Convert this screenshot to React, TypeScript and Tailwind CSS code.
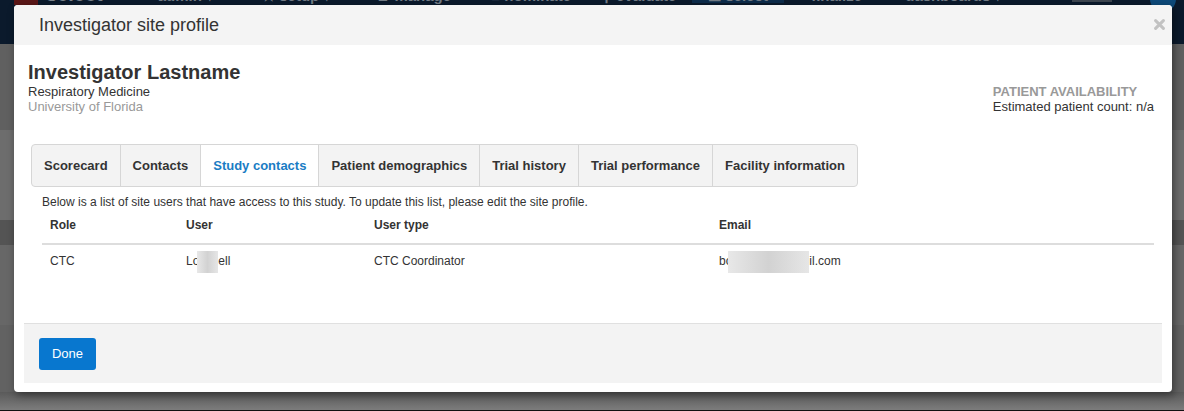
import React from "react";

const tabs = [
  "Scorecard",
  "Contacts",
  "Study contacts",
  "Patient demographics",
  "Trial history",
  "Trial performance",
  "Facility information",
];

function Blur({ w }: { w: string }) {
  return (
    <span
      className={`inline-block h-[22px] -my-[4px] align-middle bg-gradient-to-r from-[#e8e8e8] via-[#d2d2d2] to-[#e6e6e6] ${w}`}
    />
  );
}

function Backdrop() {
  return (
    <div className="flex h-full w-full flex-col">
      {/* app nav behind the overlay */}
      <div className="flex h-[44px] items-start bg-[#0b1a2c] text-[15px] font-bold text-[#737c86]">
        <div className="ml-[14px] -mt-[9px] h-[14px] w-[24px] bg-[#5b1717]" />
        <span className="-mt-[13px] ml-[8px] text-[20px] text-[#7d858e]">select</span>
        <span className="-mt-[12px] ml-[55px]">admin ▾</span>
        <span className="-mt-[12px] ml-[48px]">★ setup ▾</span>
        <span className="-mt-[12px] ml-[44px]">▲ manage</span>
        <span className="-mt-[12px] ml-[40px]">■ nominate</span>
        <span className="-mt-[12px] ml-[30px]">⚲ evaluate</span>
        <span className="-mt-[12px] ml-[16px] bg-[#0d2c4b] px-[16px]">☰ select</span>
        <span className="-mt-[12px] ml-[14px]">○ finalize</span>
        <span className="-mt-[12px] ml-[30px]">● dashboards ▾</span>
        <div className="-mt-[4px] ml-[70px] h-[6px] w-[40px] bg-[#3d4650]" />
        <div className="-mt-[14px] ml-[38px] h-[26px] w-[26px] rounded-full bg-[#0d4a7a]" />
      </div>
      <div className="h-[86px] bg-[#606060]" />
      <div className="h-[90px] bg-[#6d6d6d]" />
      <div className="h-[25px] bg-[#545454]" />
      <div className="h-[80px] bg-[#676767]" />
      <div className="flex h-[67px] items-end bg-[#626262] pb-[12px] text-[13px] text-[#2a2a2a]">
        <span className="ml-[15px] h-[12px] w-[12px] border border-[#333]" />
        <span className="ml-[98px] h-[12px] w-[12px] border border-[#444]" />
        <span className="ml-[52px] h-[12px] w-[12px] border border-[#444]" />
        <span className="ml-[34px] -mb-[2px]">Name, Name</span>
        <span className="ml-[90px] -mb-[2px]">Vn, Sn</span>
      </div>
      <div className="flex-1 bg-gradient-to-b from-[#5a5a5a] to-[#7c7c7c]" />
      <div className="h-[1px] bg-[#111]" />
    </div>
  );
}

export default function App() {
  return (
    <div className="relative h-[411px] w-[1184px] overflow-hidden font-['Liberation_Sans',Arial,sans-serif] text-[13px] leading-[15px] text-[#333]">
      <Backdrop />

      <div className="absolute left-[14px] top-[5px] flex h-[387px] w-[1158px] flex-col overflow-hidden rounded-[4px] bg-white shadow-[2px_3px_8px_rgba(0,0,0,0.45)]">
        {/* header */}
        <div className="relative flex h-[40px] shrink-0 items-center bg-[#f4f4f4] pl-[25px] text-[18px] leading-[22px] text-[#333]">
          Investigator site profile
          <button className="absolute right-[7px] top-[14px]" aria-label="Close">
            <svg width="11" height="11" viewBox="0 0 11 11">
              <path d="M1.6 1.6 L9.4 9.4 M9.4 1.6 L1.6 9.4" stroke="#c2c2c2" strokeWidth="3" strokeLinecap="round" />
            </svg>
          </button>
        </div>

        {/* profile summary */}
        <div className="flex items-end justify-between pl-[14px] pr-[18px] pt-[15px]">
          <div>
            <div className="text-[20px] font-bold leading-[24px] text-[#333]">Investigator Lastname</div>
            <div>Respiratory Medicine</div>
            <div className="text-[#999]">University of Florida</div>
          </div>
          <div className="whitespace-nowrap">
            <div className="font-bold text-[#999]">PATIENT AVAILABILITY</div>
            <div>Estimated patient count: n/a</div>
          </div>
        </div>

        {/* tabs */}
        <div className="ml-[17px] mt-[30px] flex self-start overflow-hidden rounded-[4px] border border-[#d6d6d6] bg-[#f3f3f3]">
          {tabs.map((t, i) => (
            <div
              key={t}
              className={`px-[12px] py-[13px] font-bold ${i < tabs.length - 1 ? "border-r border-[#d6d6d6]" : ""} ${
                t === "Study contacts" ? "bg-white text-[#1a7cc4]" : "text-[#333]"
              }`}
            >
              {t}
            </div>
          ))}
        </div>

        {/* study contacts */}
        <div className="mx-[28px] mt-[8px] w-[1112px] text-[12px]">
          <p>
            Below is a list of site users that have access to this study. To update this list, please edit the site
            profile.
          </p>
          <table className="w-full border-collapse text-left">
            <thead>
              <tr className="border-b-2 border-[#dddddd]">
                <th className="w-[136px] px-[8px] pb-[10px] pt-[8px] font-bold">Role</th>
                <th className="w-[188px] px-[8px] pb-[10px] pt-[8px] font-bold">User</th>
                <th className="w-[345px] px-[8px] pb-[10px] pt-[8px] font-bold">User type</th>
                <th className="px-[8px] pb-[10px] pt-[8px] font-bold">Email</th>
              </tr>
            </thead>
            <tbody>
              <tr>
                <td className="px-[8px] pb-[8px] pt-[9px]">CTC</td>
                <td className="px-[8px] pb-[8px] pt-[9px]">
                  Lo
                  <Blur w="w-[21px] -ml-[2px]" />
                  ell
                </td>
                <td className="px-[8px] pb-[8px] pt-[9px]">CTC Coordinator</td>
                <td className="px-[8px] pb-[8px] pt-[9px]">
                  bo
                  <Blur w="w-[81px] -ml-[4px]" />
                  il.com
                </td>
              </tr>
            </tbody>
          </table>
        </div>

        {/* footer */}
        <div className="mx-[10px] mb-[9px] mt-auto flex h-[60px] shrink-0 items-center border-t border-[#e0e0e0] bg-[#f3f3f3] pl-[15px]">
          <button className="h-[32px] w-[57px] rounded-[3px] bg-[#0877cf] text-[13px] text-white">Done</button>
        </div>
      </div>
    </div>
  );
}
